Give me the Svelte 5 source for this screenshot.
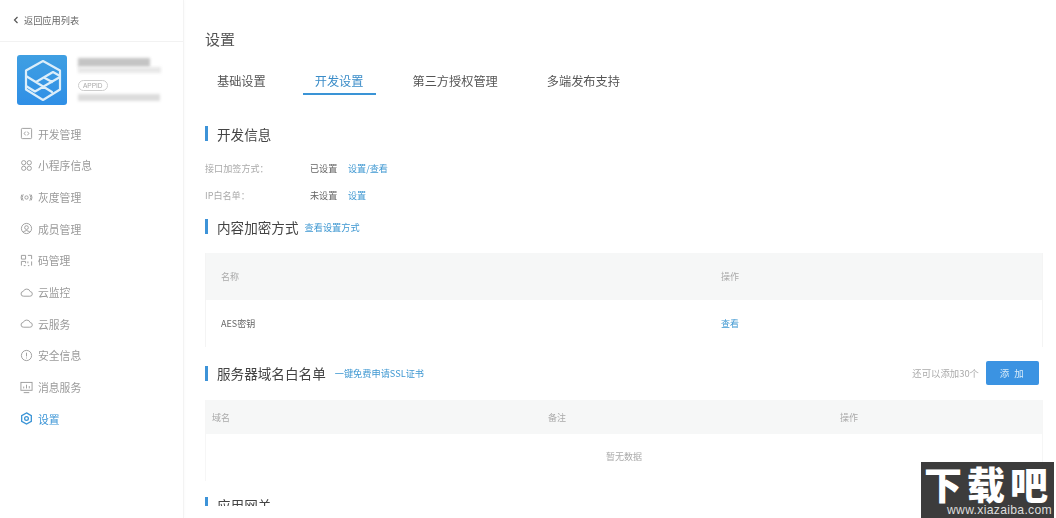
<script>
  const nav = [
    ['开发管理', 'code'], ['小程序信息', 'grid'], ['灰度管理', 'signal'], ['成员管理', 'user'], ['码管理', 'qr'],
    ['云监控', 'cloud'], ['云服务', 'cloud'], ['安全信息', 'info'], ['消息服务', 'screen'], ['设置', 'gear']
  ];
  const tabs = ['基础设置', '开发设置', '第三方授权管理', '多端发布支持'];
</script>

<div class="page">
  <aside class="side">
    <div class="back">
      <svg class="chev" viewBox="0 0 6 8" fill="none" stroke="#555" stroke-width="1.200"><path d="M4.500 1 L1.500 4 L4.500 7"/></svg>
      返回应用列表
    </div>
    <div class="app">
      <svg class="logo" viewBox="0 0 50 50">
        <defs><linearGradient id="lg" x1="0" y1="0" x2="0" y2="1"><stop offset="0" stop-color="#3f9fe2"/><stop offset="1" stop-color="#2f8fe6"/></linearGradient></defs>
        <rect width="50" height="50" rx="3" fill="url(#lg)"/>
        <g fill="none" stroke="#dceefa" stroke-width="2.200" stroke-linejoin="round" stroke-linecap="round">
          <path d="M26 6 L43 15.500 V34.500 L26 45 L9 34.500 V15.500 Z"/>
          <path d="M9 21 L35 37 M19 27 L36 17 L43 21 M9 31 L18 36.500 L43 22 M27 22.500 L35 27"/>
        </g>
      </svg>
      <div class="meta">
        <div class="blur b1"></div>
        <div class="blur b2"></div>
        <span class="appid">APPID</span>
        <div class="blur b3"></div>
      </div>
    </div>
    <nav class="nav">
      {#each nav as [label, icon], i}
        <div class="item" class:on={i === nav.length - 1}>
          <svg class="ico" viewBox="0 0 14 14" fill="none" stroke="currentColor" stroke-width="1">
            {#if icon === 'code'}
              <rect x="1.500" y="1.500" width="11" height="11" rx="1"/><path d="M6 5 L4.500 7 L6 9 M8 5 L9.500 7 L8 9"/>
            {:else if icon === 'grid'}
              <circle cx="4" cy="4" r="2.300"/><circle cx="10" cy="4" r="2.300"/><circle cx="4" cy="10" r="2.300"/><circle cx="10" cy="10" r="2.300"/>
            {:else if icon === 'signal'}
              <circle cx="7" cy="7" r="1.800"/><path d="M3.500 3.500 Q1 7 3.500 10.500 M10.500 3.500 Q13 7 10.500 10.500 M1.800 4 Q0.500 7 1.800 10 M12.200 4 Q13.500 7 12.200 10"/>
            {:else if icon === 'user'}
              <circle cx="7" cy="7" r="5.500"/><circle cx="7" cy="6" r="2"/><path d="M3.500 10.500 Q7 7.800 10.500 10.500"/>
            {:else if icon === 'qr'}
              <path d="M1.500 1.500 H6 V5.500 H1.500 Z M8.500 1.500 H12.500 M12.500 1.500 V5.500 M1.500 8 H6 V10 M1.500 8 V12.500 M4 12.500 H6 M8.500 8 V10 M12.500 8 V12.500 M8.500 12.500 H10"/>
            {:else if icon === 'cloud'}
              <path d="M4 11 H10.500 A2.500 2.500 0 0 0 11 6 A4 4 0 0 0 3.500 5.800 A2.600 2.600 0 0 0 4 11 Z"/>
            {:else if icon === 'info'}
              <circle cx="7" cy="7" r="5.500"/><path d="M7 4 V8 M7 9.200 V10.200"/>
            {:else if icon === 'screen'}
              <rect x="1" y="1.500" width="12" height="8.500"/><path d="M4 12.500 H10 M4 8 V6 M7 8 V4 M10 8 V5.500"/>
            {:else}
              <path d="M7 1 L12.200 4 V10 L7 13 L1.800 10 V4 Z" stroke-width="1.400"/><circle cx="7" cy="7" r="2" stroke-width="1.400"/>
            {/if}
          </svg>
          <span>{label}</span>
        </div>
      {/each}
    </nav>
  </aside>

  <main class="main">
    <h1 class="title">设置</h1>
    <div class="tabs">
      {#each tabs as t, i}
        <div class="tab" class:active={i === 1}>{t}</div>
      {/each}
    </div>

    <h2 class="sec first"><span>开发信息</span></h2>
    <div class="kv"><span class="k">接口加签方式：</span><span class="v">已设置</span><span class="lnk">设置/查看</span></div>
    <div class="kv"><span class="k">IP白名单：</span><span class="v">未设置</span><span class="lnk">设置</span></div>

    <h2 class="sec s2"><span>内容加密方式</span><em class="sub tight">查看设置方式</em></h2>
    <div class="t1">
      <div class="tr head"><span class="c1">名称</span><span>操作</span></div>
      <div class="tr body"><span class="c1">AES密钥</span><span class="lnk">查看</span></div>
    </div>

    <div class="secrow">
      <h2 class="sec s3"><span>服务器域名白名单</span><em class="sub">一键免费申请SSL证书</em></h2>
      <div class="right"><span class="remain">还可以添加30个</span><button class="add">添 加</button></div>
    </div>
    <div class="t2">
      <div class="head2"><span class="d1">域名</span><span class="d2">备注</span><span>操作</span></div>
      <div class="empty">暂无数据</div>
    </div>
    <h2 class="sec s4"><span>应用网关</span></h2>
  </main>

  <div class="wm">
    <div class="wm-t">下载吧</div>
    <div class="wm-u">www.xiazaiba.com</div>
  </div>
</div>

<style>
  :global(body) { margin: 0; background: #fff; }
  .page {
    width: 1056px; height: 518px; display: flex; overflow: hidden; position: relative;
    font-family: "Noto Sans CJK SC", "Liberation Sans", sans-serif; color: #555;
  }
  .side { width: 184px; height: 518px; flex: none; border-right: 1px solid #f3f3f3; box-shadow: 1px 0 3px rgba(0,0,0,.02); box-sizing: border-box; filter: blur(.35px); }
  .back { height: 39px; padding-bottom: 2px; display: flex; align-items: center; padding-left: 13px; font-size: 9.200px; color: #666; border-bottom: 1px solid #f2f2f2; }
  .chev { width: 6px; height: 8px; margin-right: 5px; flex: none; }
  .app { display: flex; padding: 13px 0 0 17px; gap: 11px; height: 60px; }
  .logo { width: 50px; height: 50px; flex: none; }
  .meta { padding-top: 3px; display: flex; flex-direction: column; align-items: flex-start; }
  .blur { filter: blur(1.500px); }
  .b1 { width: 72px; height: 9px; background: #c4c4c4; }
  .b2 { width: 83px; height: 6px; background: #e8e8e8; margin-bottom: 7px; }
  .appid { font-size: 6.500px; line-height: 9px; color: #aaa; border: 1px solid #ccc; border-radius: 6px; padding: 0 4px; font-family: "Liberation Sans", sans-serif; margin-bottom: 3px; }
  .b3 { width: 82px; height: 7px; background: #dcdcdc; }
  .nav { padding-top: 3px; }
  .item { height: 31.670px; display: flex; align-items: center; padding-left: 20px; gap: 5px; font-size: 10.800px; color: #9a9a9a; }
  .item.on { color: #3a94d6; }
  .ico { width: 13px; height: 13px; flex: none; }
  .main { flex: 1; height: 506px; overflow: hidden; padding-left: 21px; box-sizing: border-box; min-width: 0; filter: blur(.35px); }
  .title { margin: 0; padding-top: 28px; font-size: 15px; font-weight: 400; line-height: 22px; color: #555; }
  .tabs { display: flex; gap: 25px; margin-top: 9px; }
  .tab { font-size: 12.200px; padding: 11px 12px 0; height: 36px; line-height: 22px; color: #555; box-sizing: border-box; border-bottom: 2px solid transparent; }
  .tab.active { color: #3a8cc8; border-bottom-color: #3a94d6; }
  .sec { display: flex; align-items: center; margin: 0; font-weight: 400; font-size: 13.600px; line-height: 16px; color: #444; border-left: 3px solid #3d93d8; padding-left: 9px; height: 15px; }
  .first { margin-top: 31px; }
  .kv { display: flex; align-items: center; font-size: 9.100px; height: 14px; }
  .first + .kv { margin-top: 20px; }
  .kv + .kv { margin-top: 13px; }
  .k { width: 105px; color: #aaa; }
  .v { width: 38px; color: #666; }
  .lnk { color: #3f98d2; }
  .s2 { margin-top: 17px; }
  .sub { font-style: normal; font-size: 9.200px; color: #3f98d2; margin-left: 9px; }
  .sub.tight { margin-left: 6px; }
  .t1 { width: 838px; margin-top: 19px; border: 1px solid #f4f4f4; border-top: 0; border-bottom: 0; box-sizing: border-box; height: 94px; }
  .tr { display: flex; align-items: center; font-size: 9px; }
  .c1 { width: 500px; margin-left: 15px; }
  .head { height: 47px; background: #f6f7f7; color: #aaa; }
  .body { height: 47px; color: #666; }
  .secrow { display: flex; justify-content: space-between; align-items: center; width: 834px; height: 24px; margin-top: 14px; }
  .right { display: flex; align-items: center; gap: 7px; }
  .remain { font-size: 9.400px; color: #aaa; }
  .add { width: 53px; height: 24px; border: 0; border-radius: 2px; background: #3b93e2; color: #d8ecfa; font: inherit; font-size: 9.500px; padding: 0; letter-spacing: 1.500px; }
  .t2 { width: 838px; margin-top: 15px; border: 1px solid #f6f6f6; border-top: 0; border-bottom: 0; box-sizing: border-box; height: 81px; }
  .head2 { height: 34px; background: #f6f7f7; display: flex; align-items: center; font-size: 9px; color: #aaa; padding-left: 6px; }
  .d1 { width: 336px; }
  .d2 { width: 292px; }
  .empty { height: 47px; line-height: 46px; text-align: center; font-size: 9px; color: #aaa; }
  .s4 { margin-top: 16px; }
  .wm { position: absolute; left: 921px; top: 462px; width: 133px; height: 56px; background: #3c3c3c; color: #fff; box-sizing: border-box; }
  .wm-t { font-size: 38px; font-weight: 900; line-height: 41px; height: 41px; letter-spacing: 5px; padding-left: 3px; white-space: nowrap; font-family: "Noto Sans CJK SC", sans-serif; }
  .wm-u { font-size: 12.200px; line-height: 15px; height: 15px; text-align: right; padding-right: 2px; font-family: "Liberation Sans", sans-serif; letter-spacing: .3px; color: #ddd; white-space: nowrap; }
</style>
